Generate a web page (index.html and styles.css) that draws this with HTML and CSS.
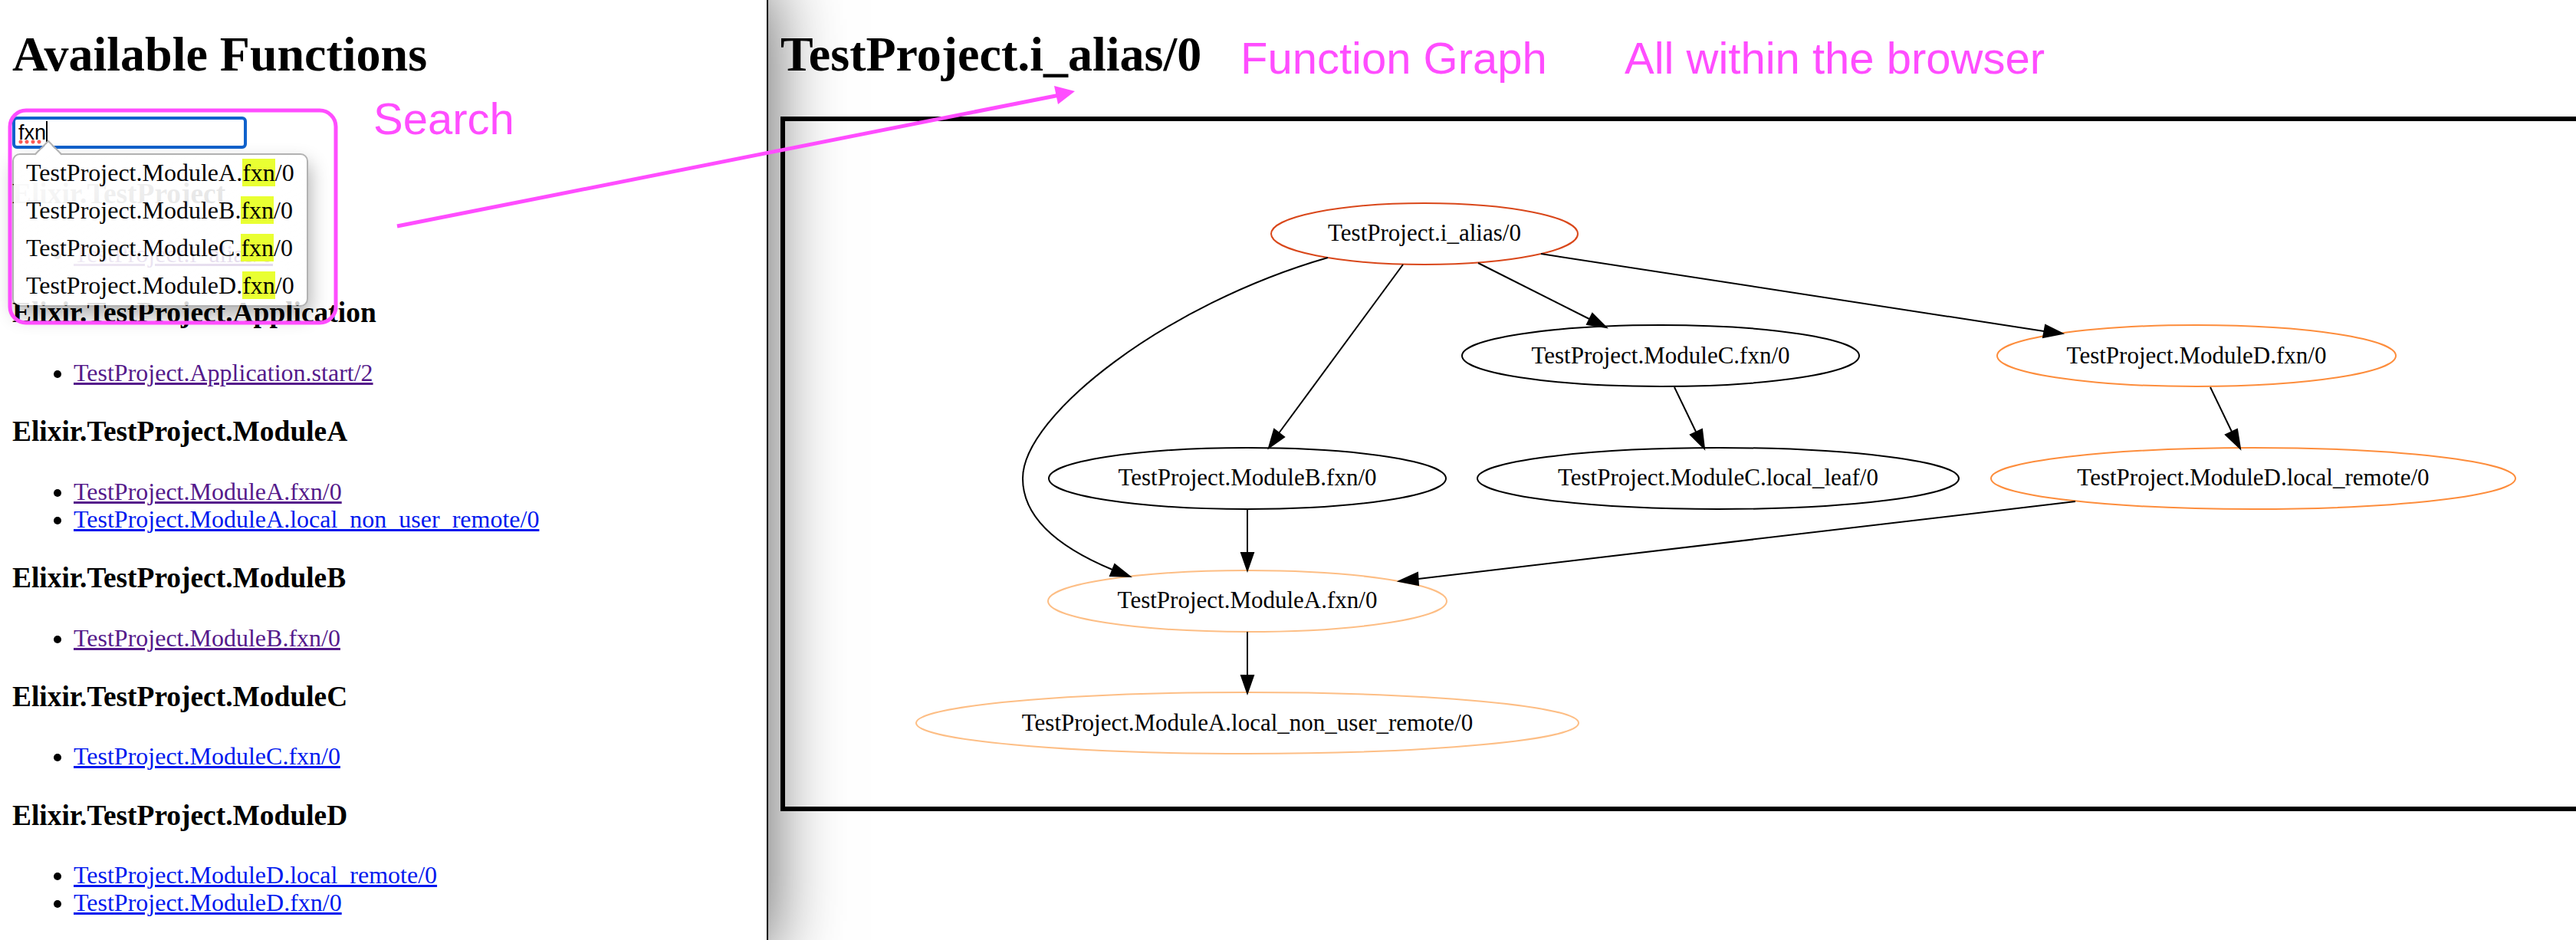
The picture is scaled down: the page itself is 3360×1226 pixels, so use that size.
FILE: index.html
```html
<!DOCTYPE html>
<html lang="en">
<head>
  <meta charset="utf-8">
  <title>TestProject.i_alias/0</title>
  <link rel="stylesheet" href="styles.css">
</head>
<body>
  <div class="layout">
    <aside class="sidebar">
      <h1 class="title">Available Functions</h1>
      <div class="search">
        <input class="search-input" type="text" value="fxn" aria-label="Search functions">
        <span class="spell-mark"></span>
        <span class="caret"></span>
        <ul class="suggestions">
          <li>TestProject.ModuleA.<mark>fxn</mark>/0</li>
          <li>TestProject.ModuleB.<mark>fxn</mark>/0</li>
          <li>TestProject.ModuleC.<mark>fxn</mark>/0</li>
          <li>TestProject.ModuleD.<mark>fxn</mark>/0</li>
        </ul>
      </div>

      <h3 class="module">Elixir.TestProject</h3>
      <ul class="functions">
        <li><a class="seen" href="#i_alias">TestProject.i_alias/0</a></li>
      </ul>
      <h3 class="module">Elixir.TestProject.Application</h3>
      <ul class="functions">
        <li><a class="seen" href="#start">TestProject.Application.start/2</a></li>
      </ul>
      <h3 class="module">Elixir.TestProject.ModuleA</h3>
      <ul class="functions">
        <li><a class="seen" href="#a-fxn">TestProject.ModuleA.fxn/0</a></li>
        <li><a href="#a-local">TestProject.ModuleA.local_non_user_remote/0</a></li>
      </ul>
      <h3 class="module">Elixir.TestProject.ModuleB</h3>
      <ul class="functions">
        <li><a class="seen" href="#b-fxn">TestProject.ModuleB.fxn/0</a></li>
      </ul>
      <h3 class="module">Elixir.TestProject.ModuleC</h3>
      <ul class="functions">
        <li><a href="#c-fxn">TestProject.ModuleC.fxn/0</a></li>
      </ul>
      <h3 class="module">Elixir.TestProject.ModuleD</h3>
      <ul class="functions">
        <li><a href="#d-local">TestProject.ModuleD.local_remote/0</a></li>
        <li><a href="#d-fxn">TestProject.ModuleD.fxn/0</a></li>
      </ul>
    </aside>

    <main class="content">
      <h1 class="title">TestProject.i_alias/0</h1>
      <div class="graph">
        <svg class="graph-svg" viewBox="1024 158 2336 894" role="img" aria-label="Call graph">
          <g class="nodes">
            <ellipse class="root" cx="1858" cy="305" rx="200" ry="40"/>
            <ellipse cx="2166" cy="464" rx="259" ry="40"/>
            <ellipse class="depth-1" cx="2865" cy="464" rx="260" ry="40"/>
            <ellipse cx="1627" cy="624" rx="259" ry="40"/>
            <ellipse cx="2241" cy="624" rx="314" ry="40"/>
            <ellipse class="depth-1" cx="2939" cy="624" rx="342" ry="40"/>
            <ellipse class="depth-2" cx="1627" cy="784" rx="260" ry="40"/>
            <ellipse class="depth-2" cx="1627" cy="943" rx="432" ry="40"/>
          </g>
          <g class="labels">
            <text x="1858" y="314">TestProject.i_alias/0</text>
            <text x="2166" y="474">TestProject.ModuleC.fxn/0</text>
            <text x="2865" y="474">TestProject.ModuleD.fxn/0</text>
            <text x="1627" y="633">TestProject.ModuleB.fxn/0</text>
            <text x="2241" y="633">TestProject.ModuleC.local_leaf/0</text>
            <text x="2939" y="633">TestProject.ModuleD.local_remote/0</text>
            <text x="1627" y="793">TestProject.ModuleA.fxn/0</text>
            <text x="1627" y="953">TestProject.ModuleA.local_non_user_remote/0</text>
          </g>
          <g class="edges">
            <path d="M1732 336C1520 397 1334 542 1334 624C1334 678 1386 716 1451 743"/>
            <path d="M1830 345L1668 565"/>
            <path d="M1928 343L2073 416"/>
            <path d="M2010 331L2666 432"/>
            <path d="M2184 505L2212 563"/>
            <path d="M2883 505L2911 563"/>
            <path d="M2707 654L1850 755"/>
            <path d="M1627 664V721"/>
            <path d="M1627 824V881"/>
          </g>
          <g class="heads">
            <path d="M1474 752L1454 736L1448 751Z"/>
            <path d="M1655 584L1662 560L1675 570Z"/>
            <path d="M2095 427L2077 409L2070 423Z"/>
            <path d="M2690 435L2668 424L2665 440Z"/>
            <path d="M2223 585L2220 560L2205 567Z"/>
            <path d="M2922 585L2918 560L2903 567Z"/>
            <path d="M1825 758L1849 747L1850 763Z"/>
            <path d="M1627 744L1619 721H1635Z"/>
            <path d="M1627 904L1619 881H1635Z"/>
          </g>
        </svg>
      </div>
    </main>
  </div>

  <svg class="annotations" aria-label="Annotations">
    <rect x="13" y="144" width="425" height="277" rx="21"/>
    <path class="arrow" d="M518 295L1382 124"/>
    <path class="arrow-head" d="M1402 119L1375 112L1380 136Z"/>
    <text x="487" y="175">Search</text>
    <text x="1618" y="96">Function Graph</text>
    <text x="2119" y="96">All within the browser</text>
  </svg>
</body>
</html>
```
FILE: styles.css
```css
html {
  font: 32px/36px "Liberation Serif", "Times New Roman", serif;
  color: #000;
  background: #fff;
}

body {
  margin: 0;
  position: relative;
  min-height: 100vh;
  overflow-x: hidden;
}

.layout {
  display: grid;
  grid-template-columns: 167fr 393fr;
}

.sidebar {
  min-height: 100vh;
  padding: 0 16px;
  border-right: 2px solid #000;
  box-shadow: -20px 0 90px 20px rgba(0, 0, 0, 0.65);
  display: flow-root;
  box-sizing: border-box;
}

.content {
  display: flow-root;
  padding-left: 16px;
  min-width: 0;
}

.title {
  margin: 34px 0 44px;
  font-size: 64px;
  line-height: 74px;
}

.search {
  position: relative;
  width: 306px;
  height: 42px;
}

.search-input {
  display: block;
  box-sizing: border-box;
  width: 100%;
  height: 42px;
  padding: 0 4px;
  border: 4px solid #1062cc;
  border-radius: 6px;
  outline: 0;
  background: #fff;
  color: #000;
  font: 27px "Liberation Sans", Arial, sans-serif;
}

.spell-mark {
  position: absolute;
  left: 8px;
  top: 30px;
  width: 32px;
  height: 6px;
  background: radial-gradient(circle at 3px 3px, #ff5a55 2px, transparent 3px) 0 0 / 8px 6px;
}

.caret {
  position: absolute;
  left: 44px;
  top: 6px;
  width: 2px;
  height: 27px;
  background: #000;
}

.suggestions {
  position: absolute;
  left: 0;
  top: 48px;
  margin: 0;
  padding: 0;
  list-style: none;
  white-space: nowrap;
  border: 2px solid rgba(0, 0, 0, 0.3);
  border-radius: 10px;
  background: linear-gradient(to bottom right, #fff, rgba(255, 255, 255, 0.8));
  background-clip: padding-box;
  box-shadow: 3px 12px 24px rgba(0, 0, 0, 0.3);
}

.suggestions::before {
  content: "";
  position: absolute;
  left: 32px;
  top: -14px;
  width: 26px;
  height: 26px;
  background: linear-gradient(135deg, #fff 50%, transparent 50%);
  border: 2px solid #b2b2b2;
  border-right: 0;
  border-bottom: 0;
  box-sizing: border-box;
  transform: rotate(45deg);
}

.suggestions li {
  position: relative;
  padding: 5px 16px 8px;
}

mark {
  background: #e9ff32;
  color: inherit;
}

.module {
  margin: 1em 0;
  line-height: 44px;
}

.functions {
  margin: 0;
  padding-left: 80px;
}

a {
  color: #0019ee;
}

a.seen {
  color: #551a8b;
}

.graph {
  border: 6px solid #000;
  border-right: 0;
}

.graph-svg {
  display: block;
  width: 100%;
}

.nodes ellipse {
  fill: none;
  stroke: #000;
  stroke-width: 2px;
}

.nodes .root {
  stroke: #d9471a;
}

.nodes .depth-1 {
  stroke: #fd8d3c;
}

.nodes .depth-2 {
  stroke: #fdbe85;
}

.labels {
  font-size: 31px;
  text-anchor: middle;
}

.edges {
  fill: none;
  stroke: #000;
  stroke-width: 2px;
}

.heads {
  stroke: #000;
  stroke-width: 2px;
}

.annotations {
  position: absolute;
  inset: 0;
  width: 100%;
  height: 100%;
  pointer-events: none;
  fill: #ff4dff;
  font: 58px "Liberation Sans", Arial, sans-serif;
}

.annotations rect,
.annotations .arrow {
  fill: none;
  stroke: #ff4dff;
  stroke-width: 5px;
}
```
